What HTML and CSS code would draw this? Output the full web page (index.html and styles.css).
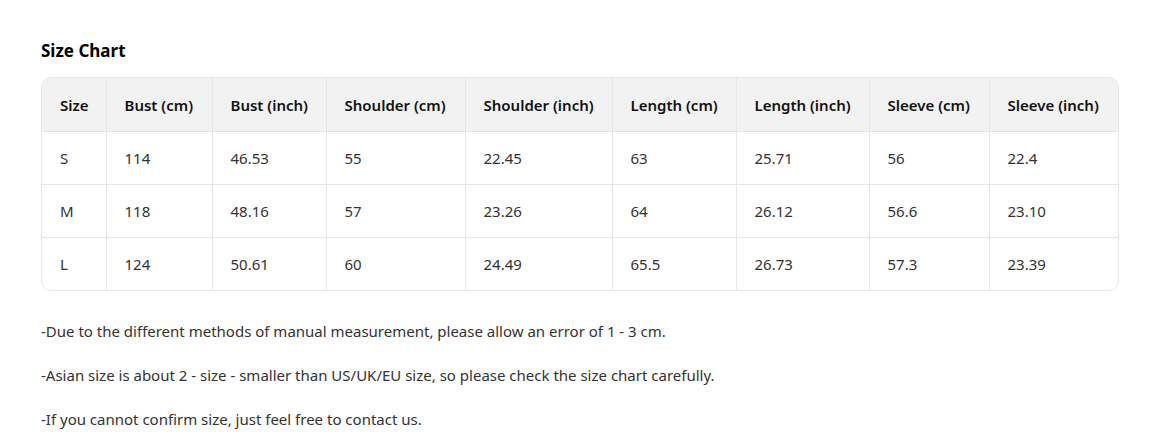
FILE: index.html
```html
<!DOCTYPE html>
<html>
<head>
<meta charset="utf-8">
<link rel="stylesheet" href="styles.css">
</head>
<body>
<div class="page">
  <h2 class="title">Size Chart</h2>
  <div class="table-wrap">
    <table class="chart">
      <colgroup>
        <col class="c1"><col class="c2"><col class="c3"><col class="c4"><col class="c5"><col class="c6"><col class="c7"><col class="c8"><col class="c9">
      </colgroup>
      <thead>
        <tr><th>Size</th><th>Bust (cm)</th><th>Bust (inch)</th><th>Shoulder (cm)</th><th>Shoulder (inch)</th><th>Length (cm)</th><th>Length (inch)</th><th>Sleeve (cm)</th><th>Sleeve (inch)</th></tr>
      </thead>
      <tbody>
        <tr><td>S</td><td>114</td><td>46.53</td><td>55</td><td>22.45</td><td>63</td><td>25.71</td><td>56</td><td>22.4</td></tr>
        <tr><td>M</td><td>118</td><td>48.16</td><td>57</td><td>23.26</td><td>64</td><td>26.12</td><td>56.6</td><td>23.10</td></tr>
        <tr><td>L</td><td>124</td><td>50.61</td><td>60</td><td>24.49</td><td>65.5</td><td>26.73</td><td>57.3</td><td>23.39</td></tr>
      </tbody>
    </table>
  </div>
  <p class="note">-Due to the different methods of manual measurement, please allow an error of 1 - 3 cm.</p>
  <p class="note">-Asian size is about 2 - size - smaller than US/UK/EU size, so please check the size chart carefully.</p>
  <p class="note">-If you cannot confirm size, just feel free to contact us.</p>
</div>
</body>
</html>
```
FILE: styles.css
```css
html, body { margin: 0; padding: 0; background: #fff; }
body { font-family: "Noto Sans", "Open Sans", sans-serif; color: #222; }
.page { padding: 40px 44px 0 41px; }
.title { margin: 0 0 15px 0; font-size: 17px; font-weight: 700; line-height: 22px; color: #000; }
.table-wrap { width: 1078px; border: 1px solid #e6e6e6; border-radius: 10px; overflow: hidden; box-sizing: border-box; }
.chart { width: 100%; border-collapse: collapse; table-layout: fixed; }
.c1 { width: 64px; } .c2 { width: 106px; } .c3 { width: 114px; } .c4 { width: 139px; } .c5 { width: 147px; }
.c6 { width: 124px; } .c7 { width: 133px; } .c8 { width: 120px; } .c9 { width: auto; }
.chart th, .chart td { text-align: left; padding: 0 0 0 18px; border-left: 1px solid #e6e6e6; border-top: 1px solid #e6e6e6; font-size: 15px; white-space: nowrap; }
.chart th:first-child, .chart td:first-child { border-left: none; }
.chart thead th { border-top: none; height: 53px; background: #f2f2f2; font-weight: 600; color: #111; }
.chart tbody td { height: 52px; color: #333; }
.note { margin: 0; font-size: 15px; line-height: 44px; color: #333; }
.table-wrap + .note { margin-top: 18px; }
```
